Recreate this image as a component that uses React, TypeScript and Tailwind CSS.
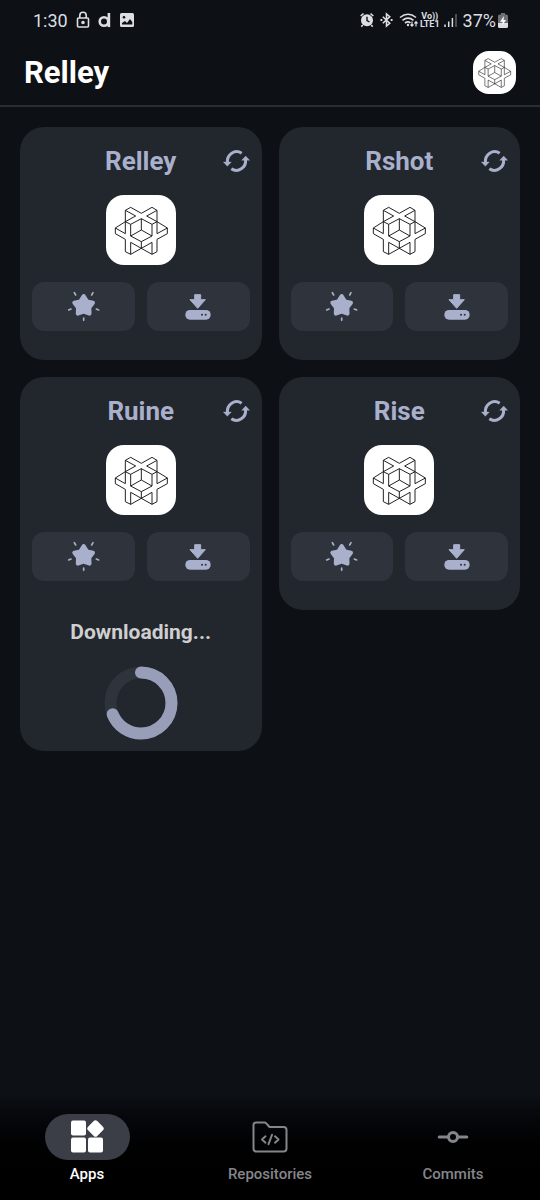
import React from "react";

type AppEntry = { name: string; progress?: number };

const apps: AppEntry[] = [
  { name: "Relley" },
  { name: "Rshot" },
  { name: "Ruine", progress: 0.69 },
  { name: "Rise" },
];

function Logo({ className }: { className: string }) {
  return (
    <svg viewBox="-18 -15 210 210" className={className} aria-hidden="true">
      <g fill="none" stroke="#111" strokeWidth="2.8" strokeLinejoin="round">
        <path d="M40 31 56 22 88 40 120 22 135 31V65L166 84V101L135 118V155L120 163 88 145 56 163 40 155V118L10 101V84L40 65Z" />
        <path d="M40 31 71 48 40 65 56 73 88 56 120 73 135 65 104 48 135 31" />
        <path d="M10 84 40 101V65M166 84 135 101V65" />
        <path d="M56 73V108L88 90 120 108V73M88 56V90M56 108 88 125 120 108M88 125V145" />
        <path d="M56 163V127L88 145 120 127V163" />
      </g>
    </svg>
  );
}

function RefreshIcon() {
  return (
    <svg viewBox="23 24 81 78" className="h-[26px] w-[27px]" aria-hidden="true">
      <path
        d="M36.5 68A27.5 29 0 0 1 79 40M90.5 58A27.5 29 0 0 1 48 86"
        fill="none"
        stroke="currentColor"
        strokeWidth="9"
      />
      <path d="M24 66H48L36 79ZM79 61H103L91 48Z" fill="currentColor" stroke="currentColor" strokeWidth="1" strokeLinejoin="round" />
    </svg>
  );
}

function StarIcon() {
  return (
    <svg viewBox="21 18 99 93" className="h-[31px] w-[33px]" aria-hidden="true">
      <path
        d="M71 33 81 49 99 53 88 67.5 88.6 86 71 80 53.4 86 54 67.5 43 53 61 49Z"
        fill="currentColor"
        stroke="currentColor"
        strokeWidth="12"
        strokeLinejoin="round"
      />
      <path d="M43 23 47 30M99 23 95 30M26 75 33 72M116 75 109 72M71 99V106" stroke="currentColor" strokeWidth="5" strokeLinecap="round" />
    </svg>
  );
}

function DownloadIcon() {
  return (
    <svg viewBox="376 26 78 78" className="size-[26px]" aria-hidden="true">
      <path d="M405 28H423V43H437L414 69 391 43H405Z" fill="currentColor" stroke="currentColor" strokeWidth="3" strokeLinejoin="round" />
      <rect x="377" y="74" width="76" height="29" rx="14" fill="currentColor" />
      <circle cx="427" cy="88" r="3" fill="#2f333b" />
      <circle cx="438" cy="88" r="3" fill="#2f333b" />
    </svg>
  );
}

function ProgressRing({ value }: { value: number }) {
  return (
    <svg viewBox="0 0 74 74" className="size-[74px]" role="img" aria-label="Download progress">
      <circle cx="37" cy="37" r="30.5" fill="none" stroke="#2f333b" strokeWidth="12" />
      <circle
        cx="37"
        cy="37"
        r="30.5"
        fill="none"
        stroke="#989eb8"
        strokeWidth="12"
        strokeLinecap="round"
        pathLength="1"
        strokeDasharray={`${value} 1`}
        transform="rotate(-90 37 37)"
      />
    </svg>
  );
}

function AppCard({ app }: { app: AppEntry }) {
  return (
    <article className="rounded-3xl bg-[#22262d] px-3 pt-4 text-[#a9b0cc]">
      <div className="grid grid-cols-[1fr_auto_1fr] items-center">
        <h2 className="col-start-2 text-[26px] leading-9 font-bold">{app.name}</h2>
        <button type="button" aria-label={`Refresh ${app.name}`} className="justify-self-end">
          <RefreshIcon />
        </button>
      </div>
      <Logo className="mx-auto mt-4 size-[70px] rounded-[18px] bg-white" />
      <div className="mt-[17px] grid grid-cols-2 gap-3">
        <button type="button" aria-label={`Star ${app.name}`} className="flex h-[49px] items-center justify-center rounded-xl bg-[#2f333b]">
          <StarIcon />
        </button>
        <button type="button" aria-label={`Download ${app.name}`} className="flex h-[49px] items-center justify-center rounded-xl bg-[#2f333b]">
          <DownloadIcon />
        </button>
      </div>
      {app.progress === undefined ? (
        <div className="h-[29px]" />
      ) : (
        <div className="flex flex-col items-center pt-[35px] pb-[11px]">
          <p className="text-[21px] leading-8 font-bold text-[#cfcfcf]">Downloading...</p>
          <div className="mt-[18px]">
            <ProgressRing value={app.progress} />
          </div>
        </div>
      )}
    </article>
  );
}

function StatusBar() {
  return (
    <div className="flex h-10 items-center justify-between pr-[32px] pl-[33px] text-[18px] text-[#dcdee2]">
      <div className="flex items-center gap-2">
        <span>1:30</span>
        <svg viewBox="0 0 14 18" className="h-[18px] w-[14px]" fill="none" stroke="currentColor" strokeWidth="1.6" aria-hidden="true">
          <rect x="1.5" y="7" width="11" height="9" rx="1" />
          <path d="M3.8 7V4.5a3.2 3.2 0 0 1 6.4 0V7" />
          <circle cx="7" cy="11.5" r="1" fill="currentColor" />
        </svg>
        <svg viewBox="0 0 14 16" className="h-4 w-[14px]" fill="none" stroke="currentColor" strokeWidth="2.6" aria-hidden="true">
          <circle cx="6" cy="9.5" r="4.3" />
          <path d="M10.9 1V15.1" />
        </svg>
        <svg viewBox="0 0 14 14" className="size-[14px]" aria-hidden="true">
          <rect width="14" height="14" rx="1.5" fill="currentColor" />
          <path d="M2 11.5V10L5 8 7 10 10 6 12.3 9V11.5Z" fill="#0e1116" />
          <circle cx="4" cy="4.2" r="1.3" fill="#0e1116" />
        </svg>
      </div>
      <div className="flex items-center">
        <svg viewBox="0 0 14 16" className="mr-1.5 h-4 w-[14px]" aria-hidden="true">
          <circle cx="7" cy="8.3" r="6" fill="currentColor" />
          <path d="M.7 4 3.5 1.5M13.3 4 10.5 1.5M2.8 13 1.3 14.6M11.2 13 12.7 14.6" stroke="currentColor" strokeWidth="1.6" />
          <path d="M7 4.8V8.5L9.5 10" fill="none" stroke="#0e1116" strokeWidth="1.4" />
        </svg>
        <svg viewBox="0 0 14 16" className="mr-1.5 h-4 w-[13px]" fill="none" stroke="currentColor" strokeWidth="1.7" aria-hidden="true">
          <path d="M3 4.5 10.5 11.5 7 14.5V1.5L10.5 4.5 3 11.5" />
          <path d="M.5 8H2.5M11.5 8H13.5" strokeWidth="2" />
        </svg>
        <svg viewBox="0 0 19 16" className="mr-0.5 h-4 w-[19px]" fill="none" stroke="currentColor" strokeWidth="1.6" aria-hidden="true">
          <path d="M1 5.5Q9 -1 17 5.5M3.5 8.3Q9 3.8 14.5 8.3M6 11Q9 8.7 11.5 11" />
          <circle cx="9" cy="13" r="1.2" fill="currentColor" stroke="none" />
          <path d="M13 9.5V14M11.5 12.5 13 14.2 14.5 12.5M17 14.5V10M15.5 11.5 17 9.7 18.5 11.5" strokeWidth="1.2" />
        </svg>
        <span className="mr-1 flex flex-col items-center text-[9px] leading-[8px] font-bold">
          <span>Vo))</span>
          <span>LTE1</span>
        </span>
        <svg viewBox="0 0 13 14" className="mr-1.5 h-[14px] w-[13px]" stroke="currentColor" strokeWidth="1.5" aria-hidden="true">
          <path d="M1 14V11.5M4.7 14V8.5M8.4 14V5" />
          <path d="M12 14V1" opacity=".4" />
        </svg>
        <span>37%</span>
        <svg viewBox="0 0 10 15" className="ml-0.5 h-[15px] w-[10px]" aria-hidden="true">
          <path d="M3 0H7V1.5H8.5Q10 1.5 10 3V10H0V3Q0 1.5 1.5 1.5H3Z" fill="#6d7076" />
          <path d="M0 10H10V13.5Q10 15 8.5 15H1.5Q0 15 0 13.5Z" fill="currentColor" />
          <path d="M6 3 2 8.7H4.5V12L8 7H5.5Z" fill="white" />
        </svg>
      </div>
    </div>
  );
}

function AppsIcon() {
  return (
    <svg viewBox="0 2 34 34" className="size-[34px]" fill="currentColor" aria-hidden="true">
      <rect x="1" y="2.5" width="15" height="15" rx="2" />
      <rect x="1" y="19.5" width="15" height="15" rx="2" />
      <rect x="18" y="19.5" width="15" height="15" rx="2" />
      <rect x="19" y="4" width="13" height="13" rx="2.5" transform="rotate(45 25.5 10.5)" />
    </svg>
  );
}

function RepositoriesIcon() {
  return (
    <svg viewBox="0 0 36 32" className="h-8 w-9" fill="none" stroke="currentColor" strokeWidth="2" strokeLinecap="round" strokeLinejoin="round" aria-hidden="true">
      <path d="M4 1.5H12.5Q13.5 1.5 14.2 2.3L17.5 6H31.5Q34.5 6 34.5 9V27.5Q34.5 30.5 31.5 30.5H4.5Q1.5 30.5 1.5 27.5V4Q1.5 1.5 4 1.5Z" />
      <path d="M13.5 15.3 10 18.5 13.5 21.7M23 15.3 26.5 18.5 23 21.7M20 13.8 16.5 23.2" />
    </svg>
  );
}

function CommitsIcon() {
  return (
    <svg viewBox="0 0 32 14" className="h-[14px] w-8" fill="none" stroke="currentColor" strokeWidth="3" strokeLinecap="round" aria-hidden="true">
      <circle cx="16" cy="7" r="4.5" />
      <path d="M2.2 7H11M21 7H29.8" />
    </svg>
  );
}

function Tab({ label, active, children }: { label: string; active?: boolean; children: React.ReactNode }) {
  return (
    <a
      href={`#${label.toLowerCase()}`}
      aria-current={active ? "page" : undefined}
      className={active ? "flex flex-col items-center gap-1 text-white" : "flex flex-col items-center gap-1 text-[#85868a]"}
    >
      <span className={active ? "flex h-[46px] w-[85px] items-center justify-center rounded-full bg-[#3b3d47]" : "flex h-[46px] w-[85px] items-center justify-center"}>
        {children}
      </span>
      <span className="text-[15px] leading-5 font-medium">{label}</span>
    </a>
  );
}

export default function App() {
  return (
    <div className="flex min-h-screen flex-col bg-[#0d1015] font-['Roboto',sans-serif]">
      <StatusBar />
      <header className="flex items-center justify-between border-b-2 border-[#2b2d32] px-6 pt-[11px] pb-[11px]">
        <h1 className="text-[31px] leading-10 font-bold text-white">Relley</h1>
        <Logo className="size-[43px] rounded-2xl bg-white" />
      </header>
      <main className="grid flex-1 grid-cols-2 content-start items-start gap-[17px] px-5 pt-5">
        {apps.map((app) => (
          <AppCard key={app.name} app={app} />
        ))}
      </main>
      <nav aria-label="Main" className="grid grid-cols-[174fr_192fr_174fr] bg-linear-to-b from-[#0d1015] to-black to-90% pt-5 pb-4">
        <Tab label="Apps" active>
          <AppsIcon />
        </Tab>
        <Tab label="Repositories">
          <RepositoriesIcon />
        </Tab>
        <Tab label="Commits">
          <CommitsIcon />
        </Tab>
      </nav>
    </div>
  );
}
